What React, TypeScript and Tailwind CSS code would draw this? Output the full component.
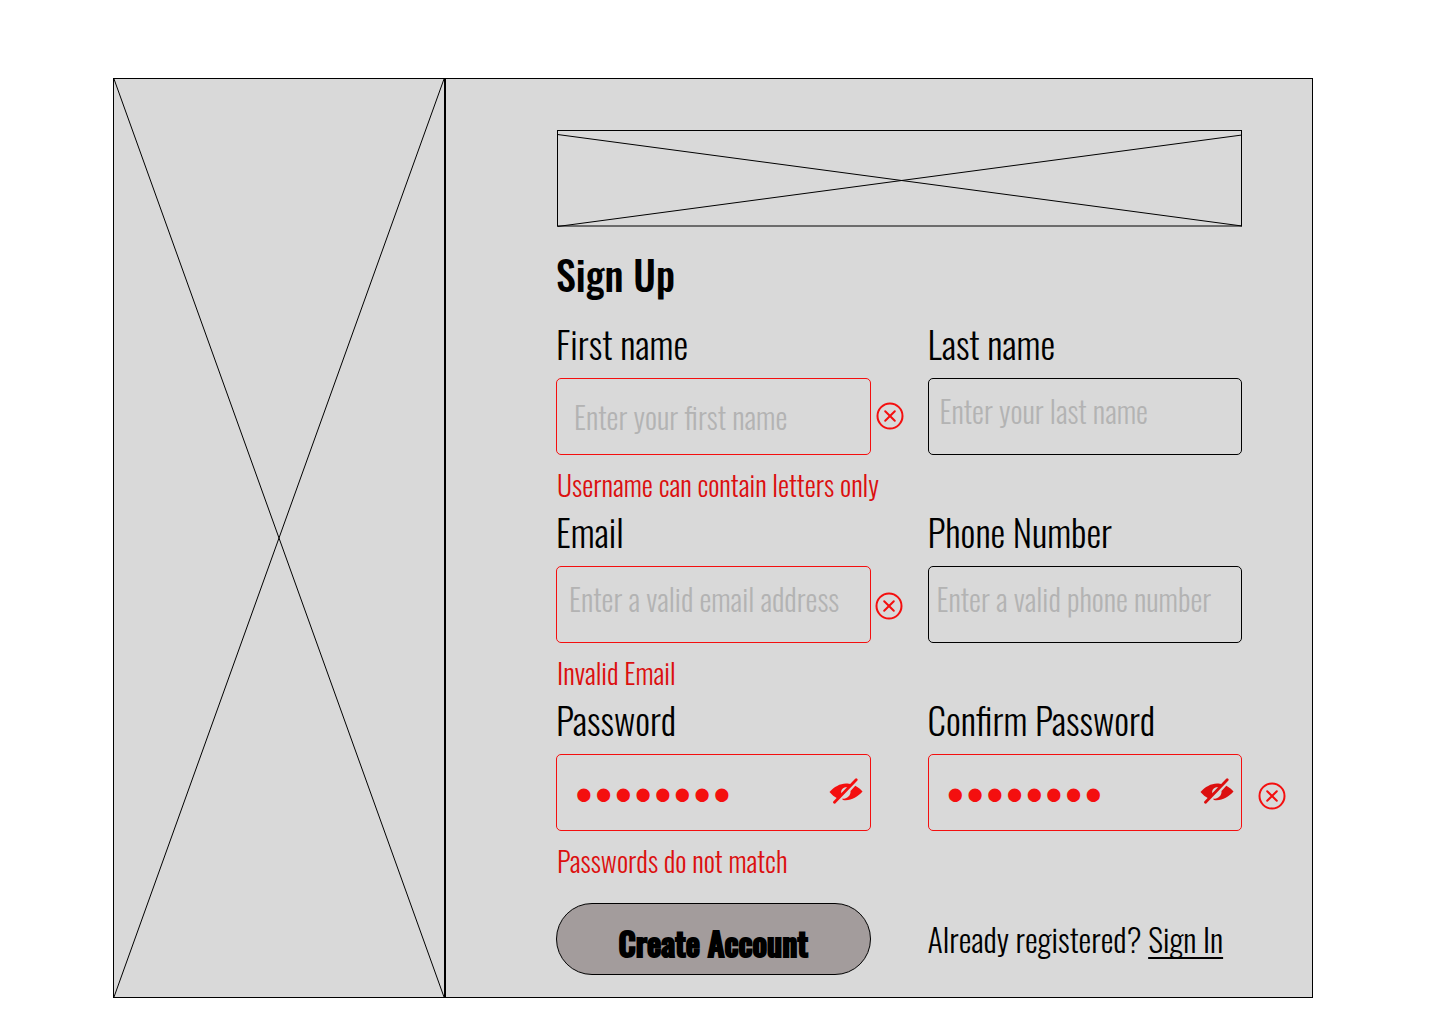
import { useId } from "react";

function ErrorMark({ className = "" }: { className?: string }) {
  return (
    <svg viewBox="0 0 28 28" className={`absolute left-full size-7 text-[#f40f0f] ${className}`} fill="none" stroke="currentColor" strokeWidth="2" strokeLinecap="round" aria-hidden="true">
      <circle cx="14" cy="14" r="12.5" />
      <path d="M9.2 9.2l9.6 9.6M18.8 9.2l-9.6 9.6" />
    </svg>
  );
}

function EyeOff() {
  return (
    <svg viewBox="0 0 34 26" className="h-[26px] w-[34px]" fill="currentColor" aria-hidden="true">
      <path d="M0.500 14C5 9 11 5.500 17 5.500C19 5.500 21 5.800 22.500 6.300L19.500 9.700C15.500 8 11.500 11 12.300 15L13 17L9 20.800C5.500 19 2.500 16.500 0.500 14Z" />
      <path d="M26.300 7.800C29 9.300 31.500 11.300 33.500 13.500C28 19.500 22 23 14 22L13 20.800C18 21 22 17.500 21.500 13Z" />
      <path d="M5.500 24.200L27.200 1.800" stroke="currentColor" strokeWidth="2.800" strokeLinecap="round" />
    </svg>
  );
}

type FieldProps = {
  label: string;
  type?: string;
  placeholder?: string;
  value?: string;
  error?: string;
  invalid?: boolean;
  mark?: string;
  inputClass?: string;
  eyeClass?: string;
};

function Field({ label, type = "text", placeholder, value, error, invalid, mark, inputClass = "", eyeClass }: FieldProps) {
  const id = useId();
  return (
    <div className="flex h-47 flex-col">
      <label htmlFor={id} className="h-[59px] shrink-0 text-[37px] leading-[50px] whitespace-nowrap">{label}</label>
      <div className="relative">
        <input
          id={id}
          type={type}
          placeholder={placeholder}
          defaultValue={value}
          aria-invalid={invalid}
          className={`block h-[77px] w-full rounded-[5px] border bg-transparent outline-none placeholder:font-light placeholder:text-[#b3b3b3] placeholder:opacity-100 ${invalid ? "border-[#f40f0f]" : "border-black"} ${inputClass}`}
        />
        {eyeClass && (
          <button type="button" aria-label="Show password" className={`absolute top-6 right-2 ${eyeClass}`}>
            <EyeOff />
          </button>
        )}
        {mark && <ErrorMark className={mark} />}
      </div>
      {error && <p className="pt-2 pl-px text-[28px] leading-[44px] whitespace-nowrap text-[#dc0f0f]">{error}</p>}
    </div>
  );
}

export default function App() {
  return (
    <main className="min-h-screen bg-white pt-[78px] pr-[127px] pb-6 pl-[113px] font-['Oswald','Roboto_Condensed',sans-serif] font-light text-black">
      <div className="grid grid-cols-[332px_1fr] bg-[#d9d9d9]">
        <aside className="border border-black">
          <svg viewBox="0 0 330 918" preserveAspectRatio="none" className="block size-full" stroke="black" fill="none" aria-hidden="true">
            <path d="M0 0L330 918M330 0L0 918" />
          </svg>
        </aside>
        <section className="border border-black pt-[51px] pr-[70px] pb-[21px] pl-[110px]">
          <svg viewBox="0 0 686 97" preserveAspectRatio="none" className="block h-[97px] w-full" stroke="black" fill="none" aria-hidden="true">
            <rect x="1.500" y="0.500" width="684" height="95.500" />
            <path d="M1.500 4.500L686 96M686 5L1.500 96.500" />
          </svg>
          <h1 className="h-[92px] pt-[17px] text-[40px] leading-[60px] font-medium">Sign Up</h1>
          <form onSubmit={(e) => e.preventDefault()}>
            <div className="grid grid-cols-2 gap-x-[57px]">
              <Field label="First name" placeholder="Enter your first name" invalid mark="top-6 ml-[5px]" error="Username can contain letters only" inputClass="pl-[17px] text-[30px]" />
              <Field label="Last name" placeholder="Enter your last name" inputClass="pl-[11px] pb-3 text-[30px]" />
              <Field label="Email" type="email" placeholder="Enter a valid email address" invalid mark="top-[26px] ml-1" error="Invalid Email" inputClass="pl-3 pb-3 text-[30px]" />
              <Field label="Phone Number" type="tel" placeholder="Enter a valid phone number" inputClass="pl-2 pb-3 text-[30px]" />
              <Field label="Password" type="password" value="password" invalid error="Passwords do not match" eyeClass="text-[#f40f0f]" inputClass="pl-[17px] font-['Lato',sans-serif] font-medium text-[34px] text-[#f40f0f]" />
              <Field label="Confirm Password" type="password" value="password" invalid mark="top-7 ml-4" eyeClass="text-[#dc0f0f]" inputClass="pl-[17px] font-['Lato',sans-serif] font-medium text-[34px] text-[#f40f0f]" />
            </div>
            <div className="mt-5 grid grid-cols-2 gap-x-[57px]">
              <button type="submit" className="h-[72px] rounded-full border border-black bg-[#a39c9c] pt-2 text-[32px] leading-[48px] font-medium [-webkit-text-stroke:2px_black]">Create Account</button>
              <p className="text-[32px] leading-[72px] whitespace-nowrap">
                Already registered? <a href="#signin" className="underline decoration-2 underline-offset-4 [text-decoration-skip-ink:none]">Sign In</a>
              </p>
            </div>
          </form>
        </section>
      </div>
    </main>
  );
}
